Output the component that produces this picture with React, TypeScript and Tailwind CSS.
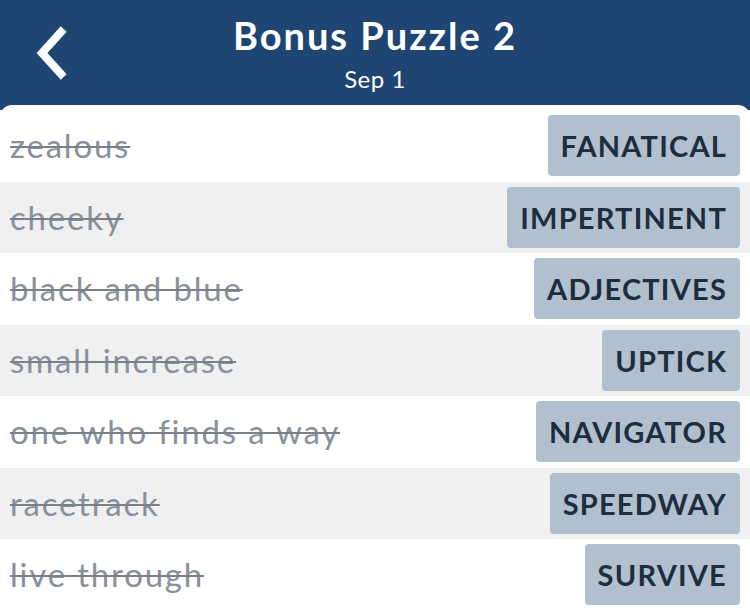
import React from 'react';

const rows = [
  { clue: 'zealous', answer: 'FANATICAL' },
  { clue: 'cheeky', answer: 'IMPERTINENT' },
  { clue: 'black and blue', answer: 'ADJECTIVES' },
  { clue: 'small increase', answer: 'UPTICK' },
  { clue: 'one who finds a way', answer: 'NAVIGATOR' },
  { clue: 'racetrack', answer: 'SPEEDWAY' },
  { clue: 'live through', answer: 'SURVIVE' },
];

const App: React.FC = () => {
  return (
    <div className="w-[750px] h-[611px] overflow-hidden bg-[#1f4673]" style={{ fontFamily: 'Lato, "Open Sans", sans-serif' }}>
      <header className="relative h-[105px] flex flex-col items-center text-white">
        <button className="absolute left-[31px] top-[26px] w-[40px] h-[54px] flex items-center justify-center">
          <svg width="36" height="54" viewBox="0 0 36 54">
            <path d="M28 6 L9 27 L28 48" fill="none" stroke="white" strokeWidth="8" strokeLinecap="square" strokeLinejoin="miter" />
          </svg>
        </button>
        <h1 className="mt-[12px] text-[38px] leading-[46px] font-bold tracking-[2px]">Bonus Puzzle 2</h1>
        <p className="mt-[7px] text-[24px] leading-[28px] tracking-[0.5px]">Sep 1</p>
      </header>
      <div className="bg-white rounded-t-[12px] pt-[5px] h-[506px]">
        {rows.map((r, i) => (
          <div
            key={r.clue}
            className={`h-[71.5px] flex items-center justify-between pl-[10px] pr-[10px] ${i % 2 === 1 ? 'bg-[#f0f0f0]' : 'bg-white'}`}
          >
            <span className="text-[33px] tracking-[1.8px] text-[#8a9099] line-through decoration-[1.5px] decoration-[#7a8089]">{r.clue}</span>
            <span className="h-[61px] flex items-center px-[13px] rounded-[4px] bg-[#b0c0ce] text-[#1e2d3d] text-[29px] font-bold tracking-[1.2px]">
              {r.answer}
            </span>
          </div>
        ))}
      </div>
    </div>
  );
};

export default App;
